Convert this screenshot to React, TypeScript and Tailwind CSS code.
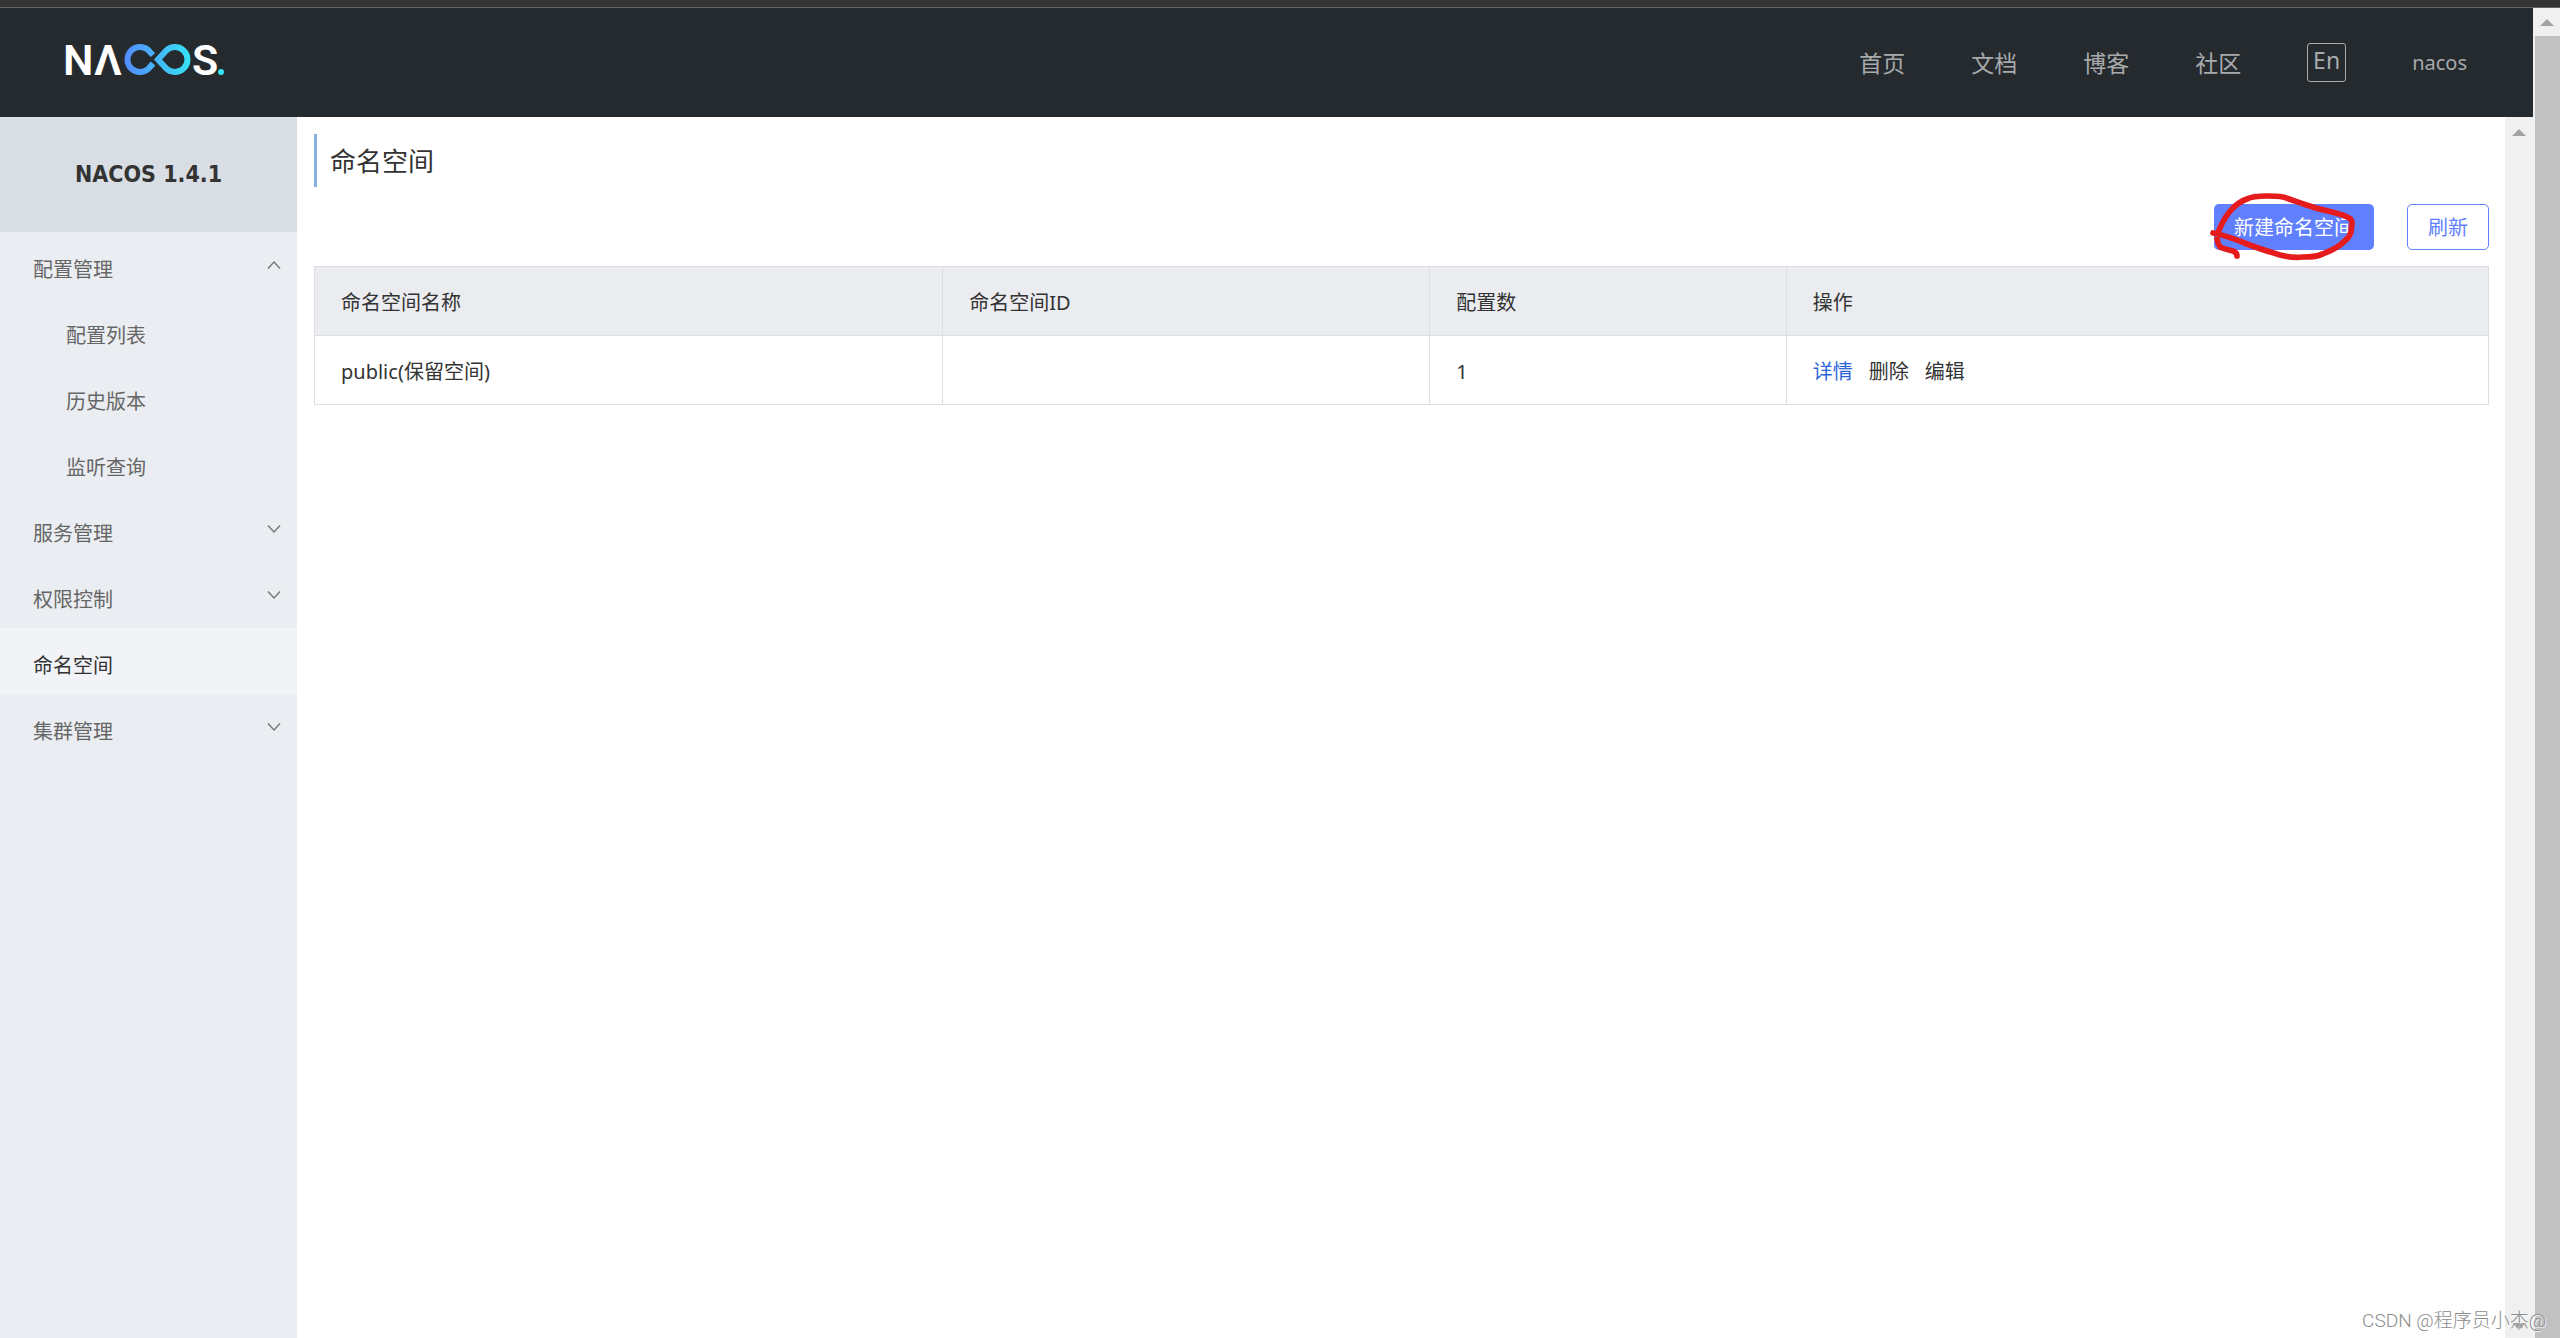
import { useState } from "react";

interface MenuItem {
  label: string;
  children?: string[];
}

interface Namespace {
  name: string;
  id: string;
  configCount: number;
}

const navLinks = ["首页", "文档", "博客", "社区"];

const menu: MenuItem[] = [
  { label: "配置管理", children: ["配置列表", "历史版本", "监听查询"] },
  { label: "服务管理", children: [] },
  { label: "权限控制", children: [] },
  { label: "命名空间" },
  { label: "集群管理", children: [] },
];

const namespaces: Namespace[] = [{ name: "public(保留空间)", id: "", configCount: 1 }];

function Logo() {
  return (
    <svg width="160" height="32" viewBox="0 0 160 32" role="img" aria-label="NACOS" className="block overflow-visible">
      <defs>
        <linearGradient id="loop" gradientUnits="userSpaceOnUse" x1="58" y1="0" x2="125" y2="0">
          <stop offset="0" stopColor="#548aff" />
          <stop offset="1" stopColor="#36e3f4" />
        </linearGradient>
      </defs>
      <g fill="#fff" fontFamily="Roboto, sans-serif" fontWeight="600" fontSize="43">
        <text x="-3" y="31">N</text>
        <text x="28" y="31">Λ</text>
        <text x="126" y="31">S</text>
      </g>
      <g fill="none" stroke="url(#loop)" strokeWidth="6">
        <path d="M87 11 L84 8 A12.5 12.5 0 1 0 84 23 L87 19.500" />
        <path d="M92 15.500 L99.800 7 A12.500 12.500 0 1 1 99.800 24 Z" />
      </g>
      <circle cx="155" cy="28" r="3" fill="#36e3f4" />
    </svg>
  );
}

function Header() {
  return (
    <header className="flex h-[109px] shrink-0 items-center justify-between bg-[#252a2f] pr-[66px] pl-[66px] text-[#a8aaac]">
      <a href="#" className="mb-1.5">
        <Logo />
      </a>
      <nav className="flex items-center gap-[66px] text-[23px]">
        {navLinks.map((label) => (
          <a key={label} href="#" className="pt-0.5">
            {label}
          </a>
        ))}
        <button className="flex size-[39px] justify-center rounded-[3px] border border-[#a8aaac] text-[23px] leading-[32px]">En</button>
        <a href="#" className="text-[20px]">
          nacos
        </a>
      </nav>
    </header>
  );
}

function Chevron({ up }: { up: boolean }) {
  return (
    <svg width="14" height="8" viewBox="0 0 14 8" fill="none" stroke="#777" strokeWidth="1.400">
      <path d={up ? "M1 7.500 L7 1 L13 7.500" : "M1 0.500 L7 7 L13 0.500"} />
    </svg>
  );
}

function Sidebar() {
  const [open, setOpen] = useState("配置管理");
  return (
    <aside className="w-[297px] shrink-0 bg-[#eaedf1] text-[20px] text-[#666]">
      <h2 className="flex h-[115px] items-center justify-center bg-[#d9dde4] font-['DejaVu_Sans_Condensed','DejaVu_Sans',sans-serif] text-[23px] font-bold text-[#333]">
        NACOS 1.4.1
      </h2>
      <ul>
        {menu.map((item) => (
          <li key={item.label}>
            {item.children ? (
              <button
                onClick={() => setOpen(open === item.label ? "" : item.label)}
                className="flex h-[66px] w-full items-center justify-between pr-4 pl-[33px]"
              >
                <span className="pt-2.5">{item.label}</span>
                <Chevron up={open === item.label} />
              </button>
            ) : (
              <a href="#" className="flex h-[66px] items-center bg-[#f1f3f7] pt-2.5 pl-[33px] text-[#333]">
                {item.label}
              </a>
            )}
            {open === item.label &&
              item.children?.map((child) => (
                <a key={child} href="#" className="flex h-[66px] items-center pt-2.5 pl-[66px]">
                  {child}
                </a>
              ))}
          </li>
        ))}
      </ul>
    </aside>
  );
}

/* Pen mark drawn round the create button */
function PenCircle() {
  return (
    <svg
      width="150"
      height="80"
      viewBox="0 0 150 80"
      fill="none"
      stroke="#e61b1b"
      strokeWidth="5.700"
      strokeLinecap="round"
      strokeLinejoin="round"
      className="pointer-events-none absolute -top-3.5 -left-1 max-w-none"
    >
      <path d="M3 43 C14 45 25 49 37 54 C50 59 60 62 70 65 C78 67 86 68 93 67 C100 67 105 67 110 65 C118 62 125 59 130 55 C136 50 140 47 141 42 L142 33 C142 29 140 28 137 27 C126 22 114 21 103 17 C92 14 83 10 73 7 C67 6 62 6 57 6 C49 6 42 6 37 9 C31 11 27 14 23 18 C17 24 13 31 10 38 C8 42 7 45 7 48 C7 52 8 54 10 57 C14 59 19 60 23 61 C26 62 27 64 27 66" />
    </svg>
  );
}

function NamespaceTable() {
  return (
    <table className="mt-4 w-full table-fixed border-collapse text-left text-[20px] text-[#333]">
      <colgroup>
        <col className="w-[28.9%]" />
        <col className="w-[22.4%]" />
        <col className="w-[16.4%]" />
        <col />
      </colgroup>
      <thead>
        <tr className="h-[69px] bg-[#ebecf0]">
          {["命名空间名称", "命名空间ID", "配置数", "操作"].map((title) => (
            <th key={title} className="border border-[#dcdee3] px-[26px] pt-1 font-normal">
              {title}
            </th>
          ))}
        </tr>
      </thead>
      <tbody>
        {namespaces.map((ns) => (
          <tr key={ns.name} className="h-[69px]">
            <td className="border border-[#dcdee3] px-[26px] pt-1">{ns.name}</td>
            <td className="border border-[#dcdee3] px-[26px] pt-1">{ns.id}</td>
            <td className="border border-[#dcdee3] px-[26px] pt-1">{ns.configCount}</td>
            <td className="border border-[#dcdee3] px-[26px] pt-1">
              <div className="flex gap-4">
                <a href="#" className="text-[#2e65d8]">
                  详情
                </a>
                <span>删除</span>
                <span>编辑</span>
              </div>
            </td>
          </tr>
        ))}
      </tbody>
    </table>
  );
}

function ArrowUp() {
  return (
    <svg width="14" height="7" viewBox="0 0 14 7" fill="#a3a3a3">
      <path d="M7 0 L14 7 H0 Z" />
    </svg>
  );
}

function ArrowDown() {
  return (
    <svg width="14" height="7" viewBox="0 0 14 7" fill="#a3a3a3">
      <path d="M0 0 H14 L7 7 Z" />
    </svg>
  );
}

export default function App() {
  return (
    <div className="relative flex h-screen flex-col overflow-hidden bg-white font-['Noto_Sans','Noto_Sans_CJK_SC',sans-serif]">
      <div className="h-2 shrink-0 border-b border-[#666] bg-[#353535]" />
      <div className="flex min-h-0 flex-1">
        <div className="flex min-w-0 flex-1 flex-col">
          <Header />
          <div className="flex min-h-0 flex-1">
            <Sidebar />
            <main className="min-w-0 flex-1 pt-[17px] pr-4 pl-[17px]">
              <h1 className="h-[53px] border-l-3 border-[#86b1e0] pl-[13px] text-[26px] leading-[55px] text-[#333]">命名空间</h1>
              <div className="mt-[17px] flex justify-end gap-[33px] text-[20px]">
                <div className="relative">
                  <button className="h-[46px] rounded-[5px] bg-[#6080ff] px-5 pt-0.5 text-white">新建命名空间</button>
                  <PenCircle />
                </div>
                <button className="h-[46px] rounded-[5px] border border-[#6080ff] px-5 pt-0.5 text-[#6080ff]">刷新</button>
              </div>
              <NamespaceTable />
            </main>
            <div className="flex w-7 shrink-0 flex-col items-center justify-between bg-[#f0f0f0] pt-3 pb-2">
              <ArrowUp />
              <ArrowDown />
            </div>
          </div>
        </div>
        <div className="flex w-[27px] shrink-0 flex-col bg-[#f0f0f0]">
          <div className="flex h-7 items-center justify-center">
            <ArrowUp />
          </div>
          <div className="ml-0.5 flex-1 bg-[#c1c1c1]" />
        </div>
      </div>
      <p className="absolute right-3.5 bottom-1 font-['Roboto','Noto_Sans_CJK_SC',sans-serif] text-[19px] leading-[26px] font-light text-[#8c8c8c] [text-shadow:1px_1px_1px_#fff]">
        CSDN @程序员小杰@
      </p>
    </div>
  );
}
